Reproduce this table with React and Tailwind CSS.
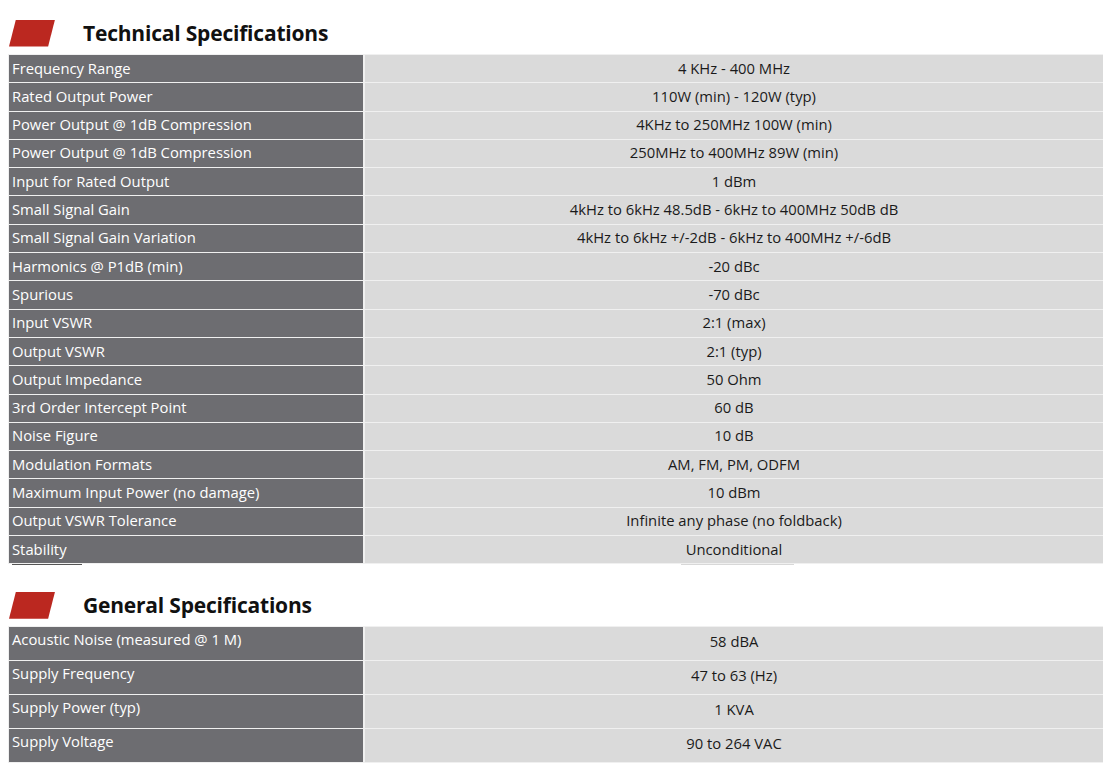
const technical = [
  ['Frequency Range', '4 KHz - 400 MHz'],
  ['Rated Output Power', '110W (min) - 120W (typ)'],
  ['Power Output @ 1dB Compression', '4KHz to 250MHz 100W (min)'],
  ['Power Output @ 1dB Compression', '250MHz to 400MHz 89W (min)'],
  ['Input for Rated Output', '1 dBm'],
  ['Small Signal Gain', '4kHz to 6kHz 48.5dB - 6kHz to 400MHz 50dB dB'],
  ['Small Signal Gain Variation', '4kHz to 6kHz +/-2dB - 6kHz to 400MHz +/-6dB'],
  ['Harmonics @ P1dB (min)', '-20 dBc'],
  ['Spurious', '-70 dBc'],
  ['Input VSWR', '2:1 (max)'],
  ['Output VSWR', '2:1 (typ)'],
  ['Output Impedance', '50 Ohm'],
  ['3rd Order Intercept Point', '60 dB'],
  ['Noise Figure', '10 dB'],
  ['Modulation Formats', 'AM, FM, PM, ODFM'],
  ['Maximum Input Power (no damage)', '10 dBm'],
  ['Output VSWR Tolerance', 'Infinite any phase (no foldback)'],
  ['Stability', 'Unconditional'],
];

const general = [
  ['Acoustic Noise (measured @ 1 M)', '58 dBA'],
  ['Supply Frequency', '47 to 63 (Hz)'],
  ['Supply Power (typ)', '1 KVA'],
  ['Supply Voltage', '90 to 264 VAC'],
];

function Heading({ title }) {
  return (
    <div className="flex items-center h-[28px]">
      <div className="w-[46px] h-[27px] bg-[#bb2820] [clip-path:polygon(15%_0,100%_0,85%_100%,0_100%)]" />
      <h2 className="ml-[28px] text-[21px] font-bold text-[#111] leading-none tracking-[-0.2px]">{title}</h2>
    </div>
  );
}

function SpecTable({ rows, rowClass, general }) {
  return (
    <div className="grid grid-cols-[354px_738px] gap-x-[2px] gap-y-[1px] bg-[#f0f0f0] p-px w-[1095px] -ml-px">
      {rows.map(([label, value], i) => (
        <div key={i} className="contents">
          <div className={`bg-[#6d6d71] text-white pl-[3px] flex ${general ? 'items-start pt-px' : 'items-center pb-[2px]'} ${rowClass}`}>
            {label}
          </div>
          <div className={`bg-[#dadada] text-[#1a1a1a] flex items-center justify-center ${general ? 'pb-[6px]' : 'pb-[2px]'} ${rowClass}`}>
            {value}
          </div>
        </div>
      ))}
    </div>
  );
}

export default function App() {
  return (
    <div className="w-[1111px] h-[777px] bg-white font-['Open_Sans','Noto_Sans',sans-serif] text-[14.8px] overflow-hidden">
      <div className="pl-[9px] pt-[19px]">
        <Heading title="Technical Specifications" />
        <div className="mt-[7px]">
          <SpecTable rows={technical} rowClass="h-[27.3px]" />
        </div>
        <div className="flex h-[2px]">
          <div className="ml-[3px] w-[70px] h-px bg-[#555]" />
          <div className="ml-[599px] w-[113px] h-px bg-[#d8d8d8]" />
        </div>
        <div className="mt-[25px]">
          <Heading title="General Specifications" />
        </div>
        <div className="mt-[7px]">
          <SpecTable rows={general} rowClass="h-[33px]" general />
        </div>
      </div>
    </div>
  );
}
